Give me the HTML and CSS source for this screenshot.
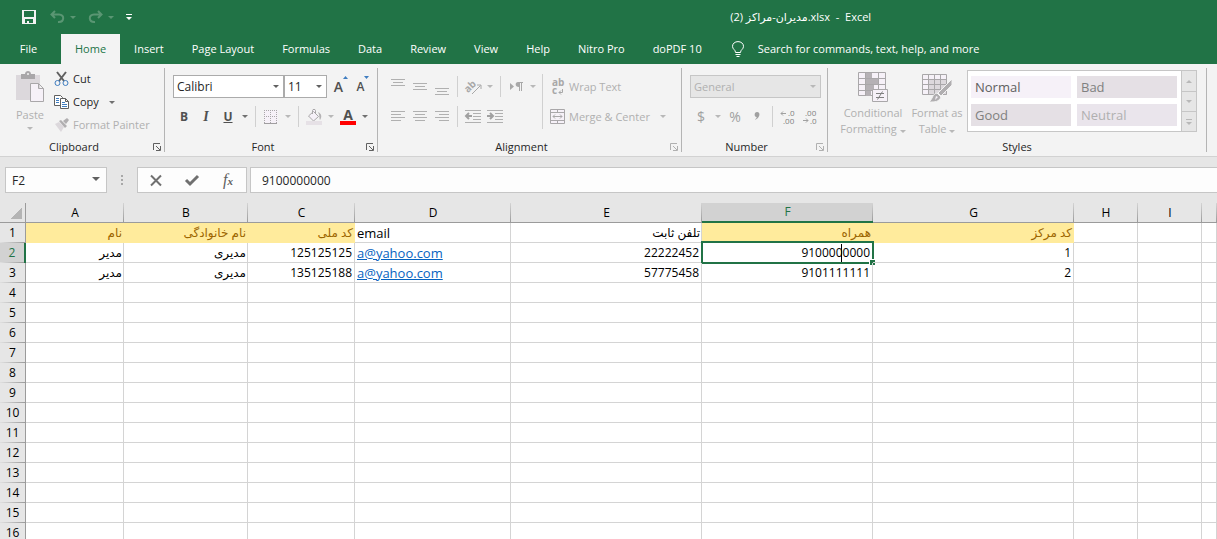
FILE: index.html
```html
<!DOCTYPE html>
<html lang="en">
<head>
  <meta charset="UTF-8">
  <meta name="viewport" content="width=device-width, initial-scale=1.0">
  <title>مدیران-مراکز (2).xlsx - Excel</title>
  <link rel="stylesheet" href="styles.css">
</head>
<body>

<header class="titlebar">
  <div class="quick-access">
    <button class="qat-btn save" aria-label="Save">
      <svg width="14" height="14" viewBox="0 0 14 14"><path fill="#f3f3f3" fill-rule="evenodd" d="M0 0h14v14H0zM2 1v6h10V1zM3 9v4h2v-2h2v2h4V9z"/></svg>
    </button>
    <button class="qat-btn" aria-label="Undo" disabled>
      <svg width="15" height="14" viewBox="0 0 15 14"><path fill="none" stroke="#5a9673" stroke-width="2" d="M5 1L1.500 4.500 5 8M2 4.500h7c6 0 5.500 8-1 7.500"/></svg>
    </button>
    <span class="caret qat-caret"></span>
    <button class="qat-btn" aria-label="Redo" disabled>
      <svg width="15" height="14" viewBox="0 0 15 14"><path fill="none" stroke="#5a9673" stroke-width="2" d="M10 1l3.500 3.500L10 8M13 4.500H6c-6 0-5.500 8 1 7.500"/></svg>
    </button>
    <span class="caret qat-caret"></span>
    <button class="qat-btn" aria-label="Customize Quick Access Toolbar">
      <svg width="6" height="6" viewBox="0 0 6 6"><path fill="#fff" d="M0 0h6v1H0zM0 3h6L3 6z"/></svg>
    </button>
  </div>
  <div class="doc-title"><bdi dir="rtl">مدیران-مراکز (2)</bdi>.xlsx&nbsp; -&nbsp; Excel</div>
</header>

<nav class="tabs">
  <button class="tab file">File</button>
  <button class="tab active">Home</button>
  <button class="tab">Insert</button>
  <button class="tab">Page Layout</button>
  <button class="tab">Formulas</button>
  <button class="tab">Data</button>
  <button class="tab">Review</button>
  <button class="tab">View</button>
  <button class="tab">Help</button>
  <button class="tab">Nitro Pro</button>
  <button class="tab">doPDF 10</button>
  <button class="tab tell-me">
    <svg width="12" height="17" viewBox="0 0 12 17"><path fill="none" stroke="#fff" d="M3.500 11.500c0-3-3-3-3-6.200C.5 2.500 3 .6 6 .6s5.500 1.900 5.500 4.700c0 3.200-3 3.200-3 6.200zM3.500 13.500h5M4.500 15.500h3"/></svg>
    Search for commands, text, help, and more
  </button>
</nav>

<section class="ribbon">

  <div class="group clipboard">
    <div class="group-body">
      <button class="big-btn paste" disabled>
        <svg width="30" height="32" viewBox="0 0 30 32">
          <path fill="#dcd8dc" d="M1 4h24v25H1z"/>
          <path fill="#a9a7a9" d="M6 3h4c0-4 6-4 6 0h4v5H6z"/><circle cx="13" cy="3" r="1" fill="#f3f3f3"/>
          <path fill="#f6f1f8" stroke="#a9a7a9" d="M15.500 12.500h8l5 5v13h-13zM23.500 12.500v5h5"/>
        </svg>
        <span>Paste</span>
        <span class="caret"></span>
      </button>
      <div class="small-btns">
        <button class="text-btn">
          <svg width="16" height="16" viewBox="0 0 16 16"><path fill="none" stroke="#606060" stroke-width="2" d="M3 1l7 9M12 1L5 10"/><circle cx="3.500" cy="12" r="2.500" fill="none" stroke="#3f7dc0"/><circle cx="11.500" cy="12" r="2.500" fill="none" stroke="#3f7dc0"/></svg>
          Cut
        </button>
        <button class="text-btn">
          <svg width="16" height="16" viewBox="0 0 16 16"><path fill="#fff" stroke="#606060" d="M.5 1.500h6l2 2v8h-8z"/><path stroke="#3f7dc0" d="M2 4.500h3M2 6.500h3M2 8.500h3"/><path fill="#fff" stroke="#606060" d="M6.500 4.500h5l3 3v7h-8zM11.500 4.500v3h3"/><path stroke="#3f7dc0" d="M8 8.500h3M8 10.500h5M8 12.500h5"/></svg>
          Copy
          <span class="caret"></span>
        </button>
        <button class="text-btn" disabled>
          <svg width="16" height="16" viewBox="0 0 16 16"><path fill="#dcd8dc" d="M1 7l4-2 5 5-3 5z"/><path fill="#b0aeb0" d="M5 4l2-1 6 6-2 2zM9 4l4-3 2 2-3 4z"/></svg>
          Format Painter
        </button>
      </div>
    </div>
    <div class="group-footer">Clipboard
      <button class="launcher" aria-label="Clipboard settings"><svg width="8" height="8" viewBox="0 0 8 8"><path fill="none" stroke="#606060" d="M.5 7V.5H7M3 3l4 4M7.500 3v4.500H3"/></svg></button>
    </div>
  </div>

  <div class="group font">
    <div class="group-body rows">
      <div class="row">
        <span class="combo font-name"><select aria-label="Font"><option>Calibri</option></select></span>
        <span class="combo font-size"><select aria-label="Font size"><option>11</option></select></span>
        <button class="icon-btn grow" aria-label="Increase font size">A<svg width="5" height="3" viewBox="0 0 5 3"><path fill="#3f7dc0" d="M0 3L2.500 0 5 3z"/></svg></button>
        <button class="icon-btn shrink" aria-label="Decrease font size">A<svg width="5" height="3" viewBox="0 0 5 3"><path fill="#3f7dc0" d="M0 0h5L2.500 3z"/></svg></button>
      </div>
      <div class="row">
        <button class="icon-btn"><b>B</b></button>
        <button class="icon-btn serif"><i>I</i></button>
        <button class="icon-btn"><u>U</u></button>
        <button class="caret-btn" aria-label="Underline options"><span class="caret"></span></button>
        <span class="sep"></span>
        <button class="icon-btn" aria-label="Borders" disabled><svg width="14" height="14" viewBox="0 0 14 14"><path fill="#f6f1f8" d="M0 0h14v13H0z"/><path fill="none" stroke="#a9a7a9" stroke-dasharray="1 1" d="M.5 0v13M6.500 0v13M12.500 0v13M0 .5h13M0 6.500h13"/><path stroke="#a09ea0" d="M0 13.500h13"/></svg></button>
        <button class="caret-btn" aria-label="Border options" disabled><span class="caret"></span></button>
        <span class="sep"></span>
        <button class="icon-btn" aria-label="Fill color" disabled><svg width="17" height="16" viewBox="0 0 17 16"><path fill="#f6f1f8" stroke="#a9a7a9" d="M2.500 7l5-4.500 5 5-5 4.500zM6.500 5V1.500c0-1.500 3-1.500 3 0V5"/><path fill="#b5b3b5" d="M12 3c4 2 4 5 2 8-1-2 0-4-2-8z"/><path fill="#e6e1e6" d="M0 12h16v4H0z"/></svg></button>
        <button class="caret-btn" aria-label="Fill color options" disabled><span class="caret"></span></button>
        <button class="icon-btn font-color" aria-label="Font color">A</button>
        <button class="caret-btn" aria-label="Font color options"><span class="caret"></span></button>
      </div>
    </div>
    <div class="group-footer">Font
      <button class="launcher" aria-label="Font settings"><svg width="8" height="8" viewBox="0 0 8 8"><path fill="none" stroke="#606060" d="M.5 7V.5H7M3 3l4 4M7.500 3v4.500H3"/></svg></button>
    </div>
  </div>

  <div class="group alignment">
    <div class="group-body">
      <div class="rows">
        <div class="row">
          <button class="icon-btn" aria-label="Top align" disabled><svg width="14" height="16" viewBox="0 0 14 16"><path stroke="#b0b0b0" d="M0 .5h14M2 3.500h10M0 6.500h14"/></svg></button>
          <button class="icon-btn" aria-label="Middle align" disabled><svg width="14" height="16" viewBox="0 0 14 16"><path stroke="#b0b0b0" d="M0 4.500h14M2 7.500h10M0 10.500h14"/></svg></button>
          <button class="icon-btn" aria-label="Bottom align" disabled><svg width="14" height="16" viewBox="0 0 14 16"><path stroke="#b0b0b0" d="M0 9.500h14M2 12.500h10M0 15.500h14"/></svg></button>
          <span class="sep"></span>
          <button class="icon-btn" aria-label="Orientation" disabled><svg width="17" height="16" viewBox="0 0 17 16"><text x="-1" y="11" transform="rotate(-45 5 8)" font-weight="bold" font-size="10" fill="#a8a8a8">ab</text><path fill="none" stroke="#a8a8a8" d="M7 15l8.500-8.500M12 6h4v4"/></svg></button>
          <button class="caret-btn" aria-label="Orientation options" disabled><span class="caret"></span></button>
          <span class="sep"></span>
          <button class="icon-btn" aria-label="Text direction" disabled><svg width="13" height="10" viewBox="0 0 13 10"><path fill="#a8a8a8" d="M0 1l4 3.500L0 8zM8 0h5v1h-1v8h-1V1h-1v8H9V5C4.500 5 5 0 8 0z"/></svg></button>
          <button class="caret-btn" aria-label="Text direction options" disabled><span class="caret"></span></button>
        </div>
        <div class="row">
          <button class="icon-btn" aria-label="Align left" disabled><svg width="14" height="11" viewBox="0 0 14 11"><path stroke="#b0b0b0" d="M0 .5h14M0 3.500h10M0 6.500h14M0 9.500h10"/></svg></button>
          <button class="icon-btn" aria-label="Center" disabled><svg width="14" height="11" viewBox="0 0 14 11"><path stroke="#b0b0b0" d="M0 .5h14M2 3.500h10M0 6.500h14M2 9.500h10"/></svg></button>
          <button class="icon-btn" aria-label="Align right" disabled><svg width="14" height="11" viewBox="0 0 14 11"><path stroke="#b0b0b0" d="M0 .5h14M4 3.500h10M0 6.500h14M4 9.500h10"/></svg></button>
          <span class="sep"></span>
          <button class="icon-btn" aria-label="Decrease indent" disabled><svg width="16" height="13" viewBox="0 0 16 13"><path stroke="#b0b0b0" d="M0 .5h16M8 3.500h8M8 6.500h8M8 9.500h8M0 12.500h16"/><path fill="none" stroke="#a0a0a0" stroke-width="2" d="M7 6H1M4 3L1 6l3 3"/></svg></button>
          <button class="icon-btn" aria-label="Increase indent" disabled><svg width="16" height="13" viewBox="0 0 16 13"><path stroke="#b0b0b0" d="M0 .5h16M8 3.500h8M8 6.500h8M8 9.500h8M0 12.500h16"/><path fill="none" stroke="#a0a0a0" stroke-width="2" d="M0 6h6M3 3l3 3-3 3"/></svg></button>
        </div>
      </div>
      <span class="sep tall"></span>
      <div class="rows">
        <button class="text-btn" disabled>
          <svg width="16" height="16" viewBox="0 0 16 16"><text x="2" y="7" font-weight="bold" font-size="10" fill="#a8a8a8">ab</text><text x="2" y="15" font-weight="bold" font-size="10" fill="#a8a8a8">c</text><path fill="none" stroke="#a8a8a8" d="M12.500 10v3.500H9M11 11.500l-2 2 2 2"/></svg>
          Wrap Text
        </button>
        <button class="text-btn" disabled>
          <svg width="16" height="16" viewBox="0 0 16 16"><path fill="#f6f1f8" stroke="#a9a7a9" d="M.5.5h14v14H.5zM.5 3.500h14M.5 11.500h14M7.500.5v3M7.500 11.500v3M3 7.500h9M5 5.500l-2 2 2 2M10 5.500l2 2-2 2"/></svg>
          Merge &amp; Center
          <span class="caret"></span>
        </button>
      </div>
    </div>
    <div class="group-footer">Alignment
      <button class="launcher" aria-label="Alignment settings" disabled><svg width="8" height="8" viewBox="0 0 8 8"><path fill="none" stroke="#b0b0b0" d="M.5 7V.5H7M3 3l4 4M7.500 3v4.500H3"/></svg></button>
    </div>
  </div>

  <div class="group number">
    <div class="group-body rows">
      <div class="row">
        <span class="combo format"><select aria-label="Number format" disabled><option>General</option></select></span>
      </div>
      <div class="row">
        <button class="icon-btn symbol" disabled>$</button>
        <button class="caret-btn" aria-label="Accounting options" disabled><span class="caret"></span></button>
        <button class="icon-btn symbol" disabled>%</button>
        <button class="icon-btn" aria-label="Comma style" disabled><svg width="6" height="9" viewBox="0 0 6 9"><path fill="#a0a0a0" d="M3 0c4 0 3 6-2 8 1-2 2-2 1.500-3C0 5 0 0 3 0z"/></svg></button>
        <span class="sep"></span>
        <button class="icon-btn" aria-label="Increase decimal" disabled><svg width="16" height="14" viewBox="0 0 16 14"><text x="8" y="6" font-size="8" fill="#808080">.0</text><text x="3" y="14" font-size="8" fill="#808080">.00</text><path fill="none" stroke="#a0a0a0" d="M6 3.500H1M3 1.500l-2 2 2 2"/></svg></button>
        <button class="icon-btn" aria-label="Decrease decimal" disabled><svg width="16" height="14" viewBox="0 0 16 14"><text x="3" y="6" font-size="8" fill="#808080">.00</text><text x="8" y="14" font-size="8" fill="#808080">.0</text><path fill="none" stroke="#a0a0a0" d="M1 10.500h5M4 8.500l2 2-2 2"/></svg></button>
      </div>
    </div>
    <div class="group-footer">Number
      <button class="launcher" aria-label="Number settings" disabled><svg width="8" height="8" viewBox="0 0 8 8"><path fill="none" stroke="#b0b0b0" d="M.5 7V.5H7M3 3l4 4M7.500 3v4.500H3"/></svg></button>
    </div>
  </div>

  <div class="group styles">
    <div class="group-body">
      <button class="big-btn conditional" disabled>
        <svg width="30" height="32" viewBox="0 0 30 32">
          <path fill="#f6f1f8" stroke="#a9a7a9" d="M.5 1.500h27v23H.5zM.5 7.500h27M.5 13.500h27M.5 19.500h27M7.500 1.500v23M20.500 1.500v23"/>
          <path fill="#b5b1b5" d="M8 2h6v5H8zM8 8h12v5H8zM8 14h8v5H8zM8 20h5v5H8z"/>
          <path fill="#f6f1f8" stroke="#a9a7a9" d="M14.500 18.500h15v12h-15z"/>
          <path stroke="#808080" d="M18 22.500h8M18 26.500h8M24.500 20.500l-5 8"/>
        </svg>
        <span>Conditional<br>Formatting <i class="caret"></i></span>
      </button>
      <button class="big-btn table-format" disabled>
        <svg width="30" height="32" viewBox="0 0 30 32">
          <path fill="#f6f1f8" d="M.5 4.500h24v19H.5z"/>
          <path fill="#dcd8dc" d="M7 9h18v15H7z"/>
          <path fill="none" stroke="#a9a7a9" d="M.5 3.500h24v20H.5zM.5 8.500h24M.5 13.500h24M.5 18.500h24M6.500 3.500v20M12.500 3.500v20M18.500 3.500v20"/>
          <path fill="#b0aeb0" stroke="#f3f3f3" d="M30 8v6l-11 11-3-3zM15 22l4 4c-2 5-6 5-12 5 4-3 3-8 8-9z"/>
          <path fill="#f6f1f8" d="M14 25l2 1-3 3z"/>
        </svg>
        <span>Format as<br>Table <i class="caret"></i></span>
      </button>
      <div class="gallery">
        <div class="swatches">
          <button class="swatch normal">Normal</button>
          <button class="swatch bad">Bad</button>
          <button class="swatch good">Good</button>
          <button class="swatch neutral">Neutral</button>
        </div>
        <div class="gallery-scroll">
          <button aria-label="Previous styles" disabled><span class="caret up"></span></button>
          <button aria-label="Next styles" disabled><span class="caret"></span></button>
          <button class="more" aria-label="More styles" disabled><span class="caret"></span></button>
        </div>
      </div>
    </div>
    <div class="group-footer">Styles</div>
  </div>
</section>

<section class="formula-bar">
  <span class="name-box"><input type="text" aria-label="Name box" value="F2"></span>
  <span class="grip"></span>
  <div class="edit-btns">
    <button aria-label="Cancel"><svg width="12" height="11" viewBox="0 0 12 11"><path stroke="#707070" stroke-width="2" d="M1 .5l10 10M11 .5l-10 10"/></svg></button>
    <button aria-label="Enter"><svg width="14" height="11" viewBox="0 0 14 11"><path fill="none" stroke="#707070" stroke-width="3" d="M1 5l4 4 8-8"/></svg></button>
    <button class="fx" aria-label="Insert function"><i>f<small>x</small></i></button>
  </div>
  <input class="formula" type="text" aria-label="Formula bar" value="9100000000">
</section>

<main class="sheet">
  <table>
    <colgroup>
      <col class="col-head"><col class="col-a"><col class="col-b"><col class="col-c"><col class="col-d"><col class="col-e"><col class="col-f"><col class="col-g"><col class="col-h"><col class="col-h"><col>
    </colgroup>
    <thead>
      <tr><th class="corner"></th><th>A</th><th>B</th><th>C</th><th>D</th><th>E</th><th class="current">F</th><th>G</th><th>H</th><th>I</th><th></th></tr>
    </thead>
    <tbody>
      <tr><th>1</th><td class="fa title">نام</td><td class="fa title">نام خانوادگی</td><td class="fa title">کد ملی</td><td class="left">email</td><td class="fa">تلفن ثابت</td><td class="fa title">همراه</td><td class="fa title">کد مرکز</td><td></td><td></td><td></td></tr>
      <tr><th class="current">2</th><td class="fa">مدیر</td><td class="fa">مدیری</td><td>125125125</td><td class="left"><a href="mailto:a@yahoo.com">a@yahoo.com</a></td><td>22222452</td><td class="selected">9100000000<span class="text-cursor"></span></td><td>1</td><td></td><td></td><td></td></tr>
      <tr><th>3</th><td class="fa">مدیر</td><td class="fa">مدیری</td><td>135125188</td><td class="left"><a href="mailto:a@yahoo.com">a@yahoo.com</a></td><td>57775458</td><td>9101111111</td><td>2</td><td></td><td></td><td></td></tr>
      <tr><th>4</th><td></td><td></td><td></td><td></td><td></td><td></td><td></td><td></td><td></td><td></td></tr>
      <tr><th>5</th><td></td><td></td><td></td><td></td><td></td><td></td><td></td><td></td><td></td><td></td></tr>
      <tr><th>6</th><td></td><td></td><td></td><td></td><td></td><td></td><td></td><td></td><td></td><td></td></tr>
      <tr><th>7</th><td></td><td></td><td></td><td></td><td></td><td></td><td></td><td></td><td></td><td></td></tr>
      <tr><th>8</th><td></td><td></td><td></td><td></td><td></td><td></td><td></td><td></td><td></td><td></td></tr>
      <tr><th>9</th><td></td><td></td><td></td><td></td><td></td><td></td><td></td><td></td><td></td><td></td></tr>
      <tr><th>10</th><td></td><td></td><td></td><td></td><td></td><td></td><td></td><td></td><td></td><td></td></tr>
      <tr><th>11</th><td></td><td></td><td></td><td></td><td></td><td></td><td></td><td></td><td></td><td></td></tr>
      <tr><th>12</th><td></td><td></td><td></td><td></td><td></td><td></td><td></td><td></td><td></td><td></td></tr>
      <tr><th>13</th><td></td><td></td><td></td><td></td><td></td><td></td><td></td><td></td><td></td><td></td></tr>
      <tr><th>14</th><td></td><td></td><td></td><td></td><td></td><td></td><td></td><td></td><td></td><td></td></tr>
      <tr><th>15</th><td></td><td></td><td></td><td></td><td></td><td></td><td></td><td></td><td></td><td></td></tr>
      <tr><th>16</th><td></td><td></td><td></td><td></td><td></td><td></td><td></td><td></td><td></td><td></td></tr>
    </tbody>
  </table>
</main>

</body>
</html>
```
FILE: styles.css
```css
* {
    box-sizing: border-box;
}

body {
    margin: 0;
    height: 100vh;
    display: flex;
    flex-direction: column;
    overflow: hidden;
    background-color: #fff;
    color: #262626;
    font-family: "Open Sans", "DejaVu Sans", sans-serif;
    font-size: 11px;
    line-height: 16px;
}

button,
input,
select {
    margin: 0;
    padding: 0;
    border: none;
    border-radius: 0;
    background: none;
    color: inherit;
    font: inherit;
}

button:disabled {
    color: #b0b0b0;
}

svg {
    display: block;
    flex: none;
    overflow: visible;
}

.caret {
    display: inline-block;
    flex: none;
    border: 3px solid transparent;
    border-top-color: #707070;
    border-bottom: none;
}

button:disabled .caret {
    border-top-color: #b8b8b8;
}

button:disabled .caret.up {
    border-top: none;
    border-bottom: 3px solid #b8b8b8;
}

/* Title bar */
.titlebar {
    display: grid;
    grid-template-columns: 60% 1fr;
    align-items: center;
    flex: none;
    height: 34px;
    background-color: #217346;
    color: #fff;
}

.quick-access {
    display: flex;
    align-items: center;
    padding-left: 22px;
}

.qat-btn.save {
    margin-right: 14px;
}

.quick-access .qat-caret {
    margin: 0 12px 0 5px;
    border-top-color: #5a9673;
}

.doc-title {
    white-space: nowrap;
}

/* Ribbon tabs */
.tabs {
    display: flex;
    flex: none;
    height: 30px;
    background-color: #217346;
    color: #fff;
}

.tab {
    padding: 0 14px;
    white-space: nowrap;
}

.tab.file {
    width: 61px;
    padding: 0 4px 0 0;
}

.tab.active {
    background-color: #f3f3f3;
    color: #217346;
}

.tab.tell-me {
    display: flex;
    align-items: center;
    gap: 14px;
    padding-left: 16px;
}

/* Ribbon */
.ribbon {
    display: flex;
    flex: none;
    padding: 4px 0;
    height: 93px;
    background-color: #f3f3f3;
    border-bottom: 1px solid #d2d2d2;
}

.group {
    display: flex;
    flex-direction: column;
    flex: none;
    border-right: 1px solid #b4b4b4;
}

.group-body {
    display: flex;
    flex: 1;
    min-height: 0;
}

.group-footer {
    position: relative;
    flex: none;
    height: 13px;
    padding-right: 16px;
    text-align: center;
}

.launcher {
    position: absolute;
    right: 3px;
    top: 4px;
}

.clipboard { width: 165px; }
.font { width: 213px; }
.alignment { width: 304px; }
.number { width: 146px; }
.styles { width: 379px; }

.styles .group-footer {
    padding-right: 0;
}

.big-btn {
    display: flex;
    flex-direction: column;
    align-items: center;
    align-self: flex-start;
    padding-top: 3px;
    gap: 2px;
    white-space: nowrap;
}

.big-btn.paste {
    width: 30px;
    gap: 4px;
    margin-left: 15px;
}

.small-btns {
    display: flex;
    flex-direction: column;
    gap: 1px;
    padding-left: 9px;
}

.text-btn {
    display: flex;
    align-items: center;
    gap: 3px;
    height: 22px;
    white-space: nowrap;
}

.text-btn .caret {
    margin-left: 7px;
}

.rows {
    display: flex;
    flex-direction: column;
    gap: 7px;
    padding-top: 7px;
}

.rows .text-btn {
    height: 23px;
}

.group-body.rows {
    padding-left: 8px;
}

.row {
    display: flex;
    align-items: center;
    height: 23px;
}

.combo {
    position: relative;
    height: 23px;
    border: 1px solid #ababab;
    background-color: #fff;
}

.combo select {
    width: 100%;
    height: 21px;
    padding: 0 3px;
    font-size: 12px;
    appearance: none;
}

.combo::after,
.name-box::after {
    content: "";
    position: absolute;
    right: 4px;
    top: 9px;
    border: 3px solid transparent;
    border-top-color: #606060;
    border-bottom: none;
}

.combo.font-name { width: 111px; }
.combo.font-size { width: 43px; }

.combo.format {
    width: 131px;
    border-color: #c6c6c6;
    background-color: #e6e6e6;
}

.combo.format select {
    color: #b0b0b0;
    font-size: 11px;
    opacity: 1;
}

.combo.format::after {
    border-top-color: #b8b8b8;
}

.icon-btn {
    display: flex;
    align-items: center;
    justify-content: center;
    flex: none;
    width: 22px;
    height: 21px;
    color: #505050;
    font-size: 12px;
}

.icon-btn b,
.icon-btn u,
.icon-btn i {
    font-weight: bold;
}

.icon-btn.serif {
    font-family: "Liberation Serif", serif;
    font-size: 14px;
}

.icon-btn.grow,
.icon-btn.shrink {
    align-items: flex-start;
    font-weight: 600;
    line-height: 22px;
}

.icon-btn.grow {
    margin-left: 3px;
    font-size: 14px;
}

.icon-btn.font-color {
    width: 16px;
    height: 16px;
    margin: 0 3px;
    border-bottom: 4px solid #f00;
    font-size: 14px;
    font-weight: bold;
}

.icon-btn.symbol {
    font-size: 14px;
    color: #a0a0a0;
}

.caret-btn {
    display: flex;
    justify-content: center;
    flex: none;
    width: 12px;
}

.sep {
    flex: none;
    width: 1px;
    height: 21px;
    margin: 0 4px;
    background-color: #d0d0d0;
}

.sep.tall {
    height: 55px;
    margin: 6px 7px 0 3px;
}

.alignment .group-body {
    padding-left: 9px;
}

.styles .group-body {
    padding-left: 11px;
}

.conditional { width: 68px; }
.table-format { width: 60px; }

.gallery {
    display: flex;
    align-self: flex-start;
    height: 62px;
    margin-top: 2px;
    border: 1px solid #c6c6c6;
    background-color: #fff;
}

.swatches {
    display: grid;
    grid-template-columns: 100px 100px;
    gap: 6px;
    padding: 5px 4px 5px 3px;
}

.swatch {
    height: 22px;
    padding: 0 4px;
    background-color: #e5e0e5;
    color: #808080;
    font-size: 13px;
    text-align: left;
}

.swatch.normal {
    background-color: #f6f1f8;
    color: #606060;
}

.swatch.neutral {
    background-color: #eae5ec;
    color: #b0b0b0;
}

.gallery-scroll {
    display: grid;
    grid-template-rows: 20px 20px 20px;
    width: 15px;
    border-left: 1px solid #c6c6c6;
    background-color: #e6e6e6;
}

.gallery-scroll button {
    display: flex;
    flex-direction: column;
    align-items: center;
    justify-content: center;
    gap: 2px;
}

.gallery-scroll button + button {
    border-top: 1px solid #c6c6c6;
}

.gallery-scroll .more::before {
    content: "";
    width: 6px;
    height: 1px;
    background-color: #b8b8b8;
}

/* Formula bar */
.formula-bar {
    display: flex;
    align-items: center;
    flex: none;
    height: 46px;
    padding-left: 5px;
    background-color: #e6e6e6;
    font-size: 12px;
}

.name-box,
.edit-btns,
.formula {
    height: 26px;
    border: 1px solid #c6c6c6;
    background-color: #fdfdfd;
}

.name-box {
    position: relative;
    width: 102px;
}

.name-box input {
    width: 80px;
    height: 24px;
    padding-left: 6px;
}

.name-box::after {
    right: 6px;
    border-width: 4px 4px 0;
}

.grip {
    height: 10px;
    margin: 0 14px;
    border-left: 2px dotted #a8a8a8;
}

.edit-btns {
    display: flex;
    width: 110px;
    margin-right: 3px;
}

.edit-btns button {
    display: flex;
    flex: 1;
    align-items: center;
    justify-content: center;
}

.edit-btns .fx {
    color: #606060;
    font-family: "Liberation Serif", serif;
    font-size: 16px;
}

.fx small {
    font-size: 11px;
    font-weight: bold;
}

.formula {
    flex: 1;
    min-width: 0;
    border-right: none;
    padding-left: 11px;
}

/* Worksheet */
.sheet {
    flex: 1;
    min-height: 0;
    overflow: hidden;
}

table {
    width: 100%;
    table-layout: fixed;
    border-collapse: separate;
    border-spacing: 0;
    color: #000;
    font-size: 12px;
}

.col-head { width: 26px; }
.col-a { width: 98px; }
.col-b { width: 124px; }
.col-c { width: 107px; }
.col-d { width: 156px; }
.col-e { width: 191px; }
.col-f { width: 171px; }
.col-g { width: 201px; }
.col-h { width: 64px; }

th,
td {
    height: 20px;
    padding: 0 2px;
    border-right: 1px solid #d4d4d4;
    border-bottom: 1px solid #d4d4d4;
    line-height: 18px;
    white-space: nowrap;
}

th {
    background-color: #e6e6e6;
    font-weight: normal;
    text-align: center;
}

td {
    position: relative;
    text-align: right;
}

thead th {
    border-right: none;
    border-bottom-color: #9b9b9b;
    background-image: linear-gradient(#d4d4d4, #9b9b9b);
    background-position: right;
    background-repeat: no-repeat;
    background-size: 1px 100%;
}

tbody th {
    border-right-color: #9b9b9b;
    border-bottom: none;
    background-image: linear-gradient(to right, #e0e0e0, #9b9b9b);
    background-position: bottom;
    background-repeat: no-repeat;
    background-size: 100% 1px;
}

thead .corner {
    background-image: linear-gradient(#9b9b9b, #9b9b9b), linear-gradient(135deg, transparent 50%, #b4b4b4 50%);
    background-position: right, 10px 4px;
    background-size: 1px 100%, 12px 12px;
}

thead .current {
    border-bottom: 2px solid #217346;
    background-color: #d2d2d2;
    color: #217346;
}

tbody .current {
    border-right: 2px solid #217346;
    background-color: #d2d2d2;
    color: #217346;
}

.left {
    font-size: 13px;
    text-align: left;
}

.fa {
    direction: rtl;
}

.title {
    border-color: #ffeb9c;
    background-color: #ffeb9c;
    color: #9c6500;
}

td.fa {
    text-align: right;
}

a {
    color: #0563c1;
}

/* Active cell frame with its fill handle */
.selected::before {
    content: "";
    position: absolute;
    inset: -2px -2px -2px -1px;
    border: 2px solid #217346;
}

.selected::after {
    content: "";
    position: absolute;
    right: -3px;
    bottom: -3px;
    width: 5px;
    height: 5px;
    border: 1px solid #fff;
    border-width: 1px 0 0 1px;
    background-color: #217346;
}

.text-cursor {
    position: absolute;
    right: 30px;
    top: 1px;
    width: 1px;
    height: 18px;
    background-color: #000;
}
```
